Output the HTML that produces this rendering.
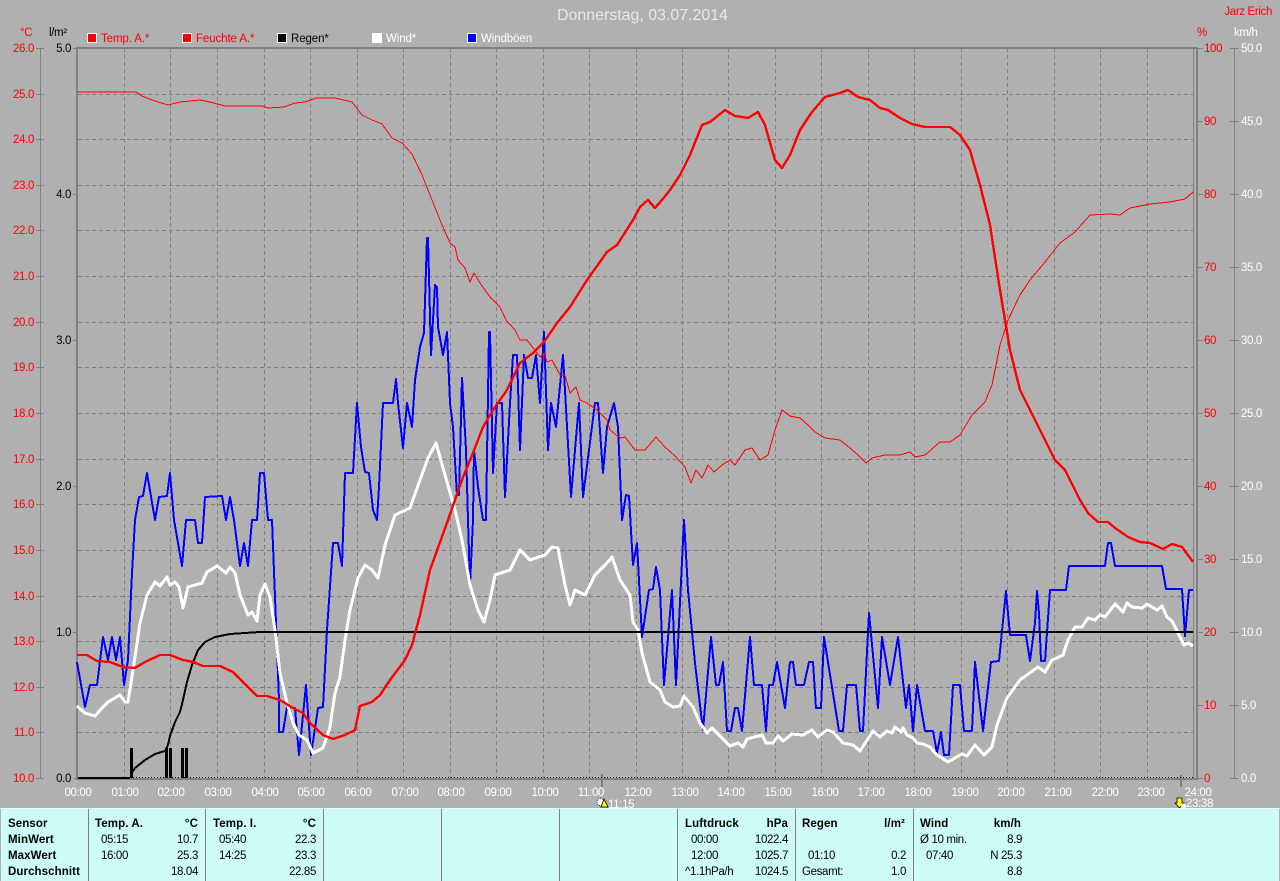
<!DOCTYPE html>
<html lang="de"><head><meta charset="utf-8"><title>Donnerstag, 03.07.2014</title>
<style>
html,body{margin:0;padding:0;background:#b0b0b0;width:1280px;height:881px;overflow:hidden}
svg{display:block}
text{font-family:"Liberation Sans",sans-serif;font-size:11.5px;letter-spacing:-.35px}
.r{fill:#f00}.w{fill:#fff}.k{fill:#000}
.e{text-anchor:end}.m{text-anchor:middle}
.l{letter-spacing:-.1px}
.b{font-weight:bold;fill:#000;font-size:11.5px;letter-spacing:.1px}
.p{fill:#000}
polyline,line,rect.c{shape-rendering:crispEdges}
polyline{fill:none;stroke-linejoin:round}
</style></head><body>
<svg width="1280" height="881" viewBox="0 0 1280 881" xmlns="http://www.w3.org/2000/svg">
<rect width="1280" height="881" fill="#b0b0b0"/>

<!-- title -->
<text x="642.5" y="20" class="m" style="font-size:16px;letter-spacing:0" fill="#e8e8e8" textLength="171" lengthAdjust="spacingAndGlyphs">Donnerstag, 03.07.2014</text>
<text x="1272" y="15" class="e r">Jarz Erich</text>
<text x="20" y="36" class="r">°C</text>
<text x="49" y="36" class="k">l/m²</text>
<text x="1197" y="36" class="r">%</text>
<text x="1234" y="36" class="w">km/h</text>

<!-- legend -->
<rect class="c" x="87.5" y="33.5" width="9" height="9" fill="#f00" stroke="#fff"/>
<text x="101" y="42" class="r l">Temp. A.*</text>
<rect class="c" x="182.5" y="33.5" width="9" height="9" fill="#f00" stroke="#fff"/>
<text x="196" y="42" class="r l">Feuchte A.*</text>
<rect class="c" x="277.5" y="33.5" width="9" height="9" fill="#000" stroke="#fff"/>
<text x="291" y="42" class="k l">Regen*</text>
<rect class="c" x="372" y="33" width="10" height="10" fill="#fff"/>
<text x="386" y="42" class="w l">Wind*</text>
<rect class="c" x="467.5" y="33.5" width="9" height="9" fill="#00f" stroke="#fff"/>
<text x="481" y="42" class="w l">Windböen</text>

<!-- grid -->
<g stroke="#808080" stroke-width="1" stroke-dasharray="4 3">
<line x1="78" x2="1193" y1="94.5" y2="94.5"/><line x1="78" x2="1193" y1="139.5" y2="139.5"/><line x1="78" x2="1193" y1="185.5" y2="185.5"/><line x1="78" x2="1193" y1="230.5" y2="230.5"/><line x1="78" x2="1193" y1="276.5" y2="276.5"/><line x1="78" x2="1193" y1="322.5" y2="322.5"/><line x1="78" x2="1193" y1="367.5" y2="367.5"/><line x1="78" x2="1193" y1="413.5" y2="413.5"/><line x1="78" x2="1193" y1="459.5" y2="459.5"/><line x1="78" x2="1193" y1="504.5" y2="504.5"/><line x1="78" x2="1193" y1="550.5" y2="550.5"/><line x1="78" x2="1193" y1="596.5" y2="596.5"/><line x1="78" x2="1193" y1="641.5" y2="641.5"/><line x1="78" x2="1193" y1="687.5" y2="687.5"/><line x1="78" x2="1193" y1="732.5" y2="732.5"/>
<line y1="48" y2="778" x1="124.5" x2="124.5"/><line y1="48" y2="778" x1="170.5" x2="170.5"/><line y1="48" y2="778" x1="217.5" x2="217.5"/><line y1="48" y2="778" x1="264.5" x2="264.5"/><line y1="48" y2="778" x1="310.5" x2="310.5"/><line y1="48" y2="778" x1="357.5" x2="357.5"/><line y1="48" y2="778" x1="403.5" x2="403.5"/><line y1="48" y2="778" x1="450.5" x2="450.5"/><line y1="48" y2="778" x1="496.5" x2="496.5"/><line y1="48" y2="778" x1="543.5" x2="543.5"/><line y1="48" y2="778" x1="589.5" x2="589.5"/><line y1="48" y2="778" x1="636.5" x2="636.5"/><line y1="48" y2="778" x1="682.5" x2="682.5"/><line y1="48" y2="778" x1="728.5" x2="728.5"/><line y1="48" y2="778" x1="775.5" x2="775.5"/><line y1="48" y2="778" x1="821.5" x2="821.5"/><line y1="48" y2="778" x1="868.5" x2="868.5"/><line y1="48" y2="778" x1="914.5" x2="914.5"/><line y1="48" y2="778" x1="961.5" x2="961.5"/><line y1="48" y2="778" x1="1007.5" x2="1007.5"/><line y1="48" y2="778" x1="1054.5" x2="1054.5"/><line y1="48" y2="778" x1="1100.5" x2="1100.5"/><line y1="48" y2="778" x1="1147.5" x2="1147.5"/>
</g>

<!-- axes -->
<g stroke="#808080" fill="none">
<line x1="76" x2="1198" y1="48" y2="48" stroke-width="2"/>
<line x1="77" x2="77" y1="47" y2="779" stroke-width="2"/>
<line x1="1193.5" x2="1193.5" y1="47" y2="779" stroke-width="1"/>
<line x1="1197" x2="1197" y1="47" y2="779" stroke-width="2"/>
<line x1="76" x2="1198" y1="779" y2="779" stroke-width="2"/>
<line x1="40.5" x2="40.5" y1="48" y2="778"/>
<line x1="1234.5" x2="1234.5" y1="48" y2="778"/>
<line x1="602" x2="602" y1="774" y2="787" stroke-width="2"/>
<line x1="1181" x2="1181" y1="775" y2="787" stroke-width="2"/>
<path d="M36 48.5h8M36 94.5h8M36 139.5h8M36 185.5h8M36 230.5h8M36 276.5h8M36 322.5h8M36 367.5h8M36 413.5h8M36 459.5h8M36 504.5h8M36 550.5h8M36 596.5h8M36 641.5h8M36 687.5h8M36 732.5h8M36 778.5h8" shape-rendering="crispEdges"/>
<path d="M73 48.5h4M73 194.5h4M73 340.5h4M73 486.5h4M73 632.5h4M73 778.5h4" shape-rendering="crispEdges"/>
<path d="M1198 48.5h5M1198 121.5h5M1198 194.5h5M1198 267.5h5M1198 340.5h5M1198 413.5h5M1198 486.5h5M1198 559.5h5M1198 632.5h5M1198 705.5h5M1198 778.5h5" shape-rendering="crispEdges"/>
<path d="M1230 48.5h8M1230 121.5h8M1230 194.5h8M1230 267.5h8M1230 340.5h8M1230 413.5h8M1230 486.5h8M1230 559.5h8M1230 632.5h8M1230 705.5h8M1230 778.5h8" shape-rendering="crispEdges"/>
</g>

<!-- left scale -->
<g class="r">
<text x="34" y="52" class="e r">26.0</text><text x="34" y="98" class="e r">25.0</text><text x="34" y="143" class="e r">24.0</text><text x="34" y="189" class="e r">23.0</text><text x="34" y="234" class="e r">22.0</text><text x="34" y="280" class="e r">21.0</text><text x="34" y="326" class="e r">20.0</text><text x="34" y="371" class="e r">19.0</text><text x="34" y="417" class="e r">18.0</text><text x="34" y="463" class="e r">17.0</text><text x="34" y="508" class="e r">16.0</text><text x="34" y="554" class="e r">15.0</text><text x="34" y="600" class="e r">14.0</text><text x="34" y="645" class="e r">13.0</text><text x="34" y="691" class="e r">12.0</text><text x="34" y="736" class="e r">11.0</text><text x="34" y="782" class="e r">10.0</text>
</g>
<text x="71" y="52" class="e k">5.0</text><text x="71" y="198" class="e k">4.0</text><text x="71" y="344" class="e k">3.0</text><text x="71" y="490" class="e k">2.0</text><text x="71" y="636" class="e k">1.0</text><text x="71" y="782" class="e k">0.0</text>

<!-- right scales -->
<text x="1204" y="52" class="r">100</text><text x="1204" y="125" class="r">90</text><text x="1204" y="198" class="r">80</text><text x="1204" y="271" class="r">70</text><text x="1204" y="344" class="r">60</text><text x="1204" y="417" class="r">50</text><text x="1204" y="490" class="r">40</text><text x="1204" y="563" class="r">30</text><text x="1204" y="636" class="r">20</text><text x="1204" y="709" class="r">10</text><text x="1204" y="782" class="r">0</text>
<text x="1241" y="52" class="w">50.0</text><text x="1241" y="125" class="w">45.0</text><text x="1241" y="198" class="w">40.0</text><text x="1241" y="271" class="w">35.0</text><text x="1241" y="344" class="w">30.0</text><text x="1241" y="417" class="w">25.0</text><text x="1241" y="490" class="w">20.0</text><text x="1241" y="563" class="w">15.0</text><text x="1241" y="636" class="w">10.0</text><text x="1241" y="709" class="w">5.0</text><text x="1241" y="782" class="w">0.0</text>

<!-- time labels -->
<text x="78" y="796" class="m w">00:00</text><text x="125" y="796" class="m w">01:00</text><text x="171" y="796" class="m w">02:00</text><text x="218" y="796" class="m w">03:00</text><text x="265" y="796" class="m w">04:00</text><text x="311" y="796" class="m w">05:00</text><text x="358" y="796" class="m w">06:00</text><text x="405" y="796" class="m w">07:00</text><text x="451" y="796" class="m w">08:00</text><text x="498" y="796" class="m w">09:00</text><text x="545" y="796" class="m w">10:00</text><text x="591" y="796" class="m w">11:00</text><text x="638" y="796" class="m w">12:00</text><text x="685" y="796" class="m w">13:00</text><text x="731" y="796" class="m w">14:00</text><text x="778" y="796" class="m w">15:00</text><text x="825" y="796" class="m w">16:00</text><text x="871" y="796" class="m w">17:00</text><text x="918" y="796" class="m w">18:00</text><text x="965" y="796" class="m w">19:00</text><text x="1011" y="796" class="m w">20:00</text><text x="1058" y="796" class="m w">21:00</text><text x="1105" y="796" class="m w">22:00</text><text x="1151" y="796" class="m w">23:00</text><text x="1198" y="796" class="m w">24:00</text>

<!-- dotted baseline -->
<line x1="130" x2="1193" y1="777.5" y2="777.5" stroke="#000" stroke-dasharray="1 2"/>

<!-- Windböen -->
<polyline stroke="#00f" stroke-width="2" points="77,662 85,707 90,685 97,685 103,637 108,660 112,637 116,660 120,637 124,685 128,660 132,573 135,520 139,497 143,496 147,473 155,520 159,497 167,496 170,473 174,520 182,566 186,520 195,520 198,543 202,543 205,497 222,496 226,520 230,497 234,520 240,566 244,543 248,566 252,520 257,520 260,473 264,473 268,520 272,520 275,597 279,700 279,732 283,732 287,707 295,708 299,755 306,685 311,755 318,708 323,707 327,630 333,543 338,543 342,566 345,473 353,473 357,403 361,447 365,472 369,473 373,510 377,520 379,487 383,403 393,403 396,379 398,403 403,448 407,403 412,427 415,380 420,347 424,333 427,238 428,238 431,355 435,285 437,287 438,327 443,355 447,332 450,403 453,427 457,495 459,495 462,378 466,450 468,520 470,585 473,520 474,450 478,487 483,520 486,520 489,332 490,332 493,473 497,403 502,403 505,497 510,403 513,355 517,355 520,450 524,355 528,378 532,378 536,355 540,403 544,332 548,450 551,403 556,427 563,355 571,497 579,403 583,497 595,403 598,403 603,473 607,427 614,403 618,427 622,520 626,495 629,496 633,565 637,543 642,637 649,590 653,589 656,567 660,590 664,685 672,590 676,685 684,520 688,590 695,663 703,730 711,637 716,685 719,685 723,662 727,731 731,731 735,708 738,708 742,731 750,637 754,685 762,685 766,731 769,685 773,685 777,662 785,708 790,662 793,662 796,685 804,685 809,662 813,662 816,708 821,708 824,637 839,731 843,731 847,685 856,685 860,731 863,731 869,613 878,708 882,637 890,685 898,637 906,708 909,685 913,731 917,685 925,731 933,731 937,753 941,732 944,755 949,755 953,685 960,685 964,731 972,731 975,662 983,731 991,662 999,661 1006,591 1010,635 1026,635 1030,661 1035,623 1037,591 1039,613 1041,661 1045,661 1050,590 1066,590 1069,566 1105,566 1108,543 1111,543 1115,566 1162,566 1166,589 1182,589 1185,636 1189,590 1193,590"/>

<!-- Wind -->
<polyline stroke="#fff" stroke-width="3" points="77,706 85,713 95,716 102,708 108,702 120,695 125,702 128,702 135,657 140,623 147,595 155,582 160,586 167,577 170,585 175,582 179,587 183,608 188,587 202,583 207,572 217,566 226,573 230,567 235,573 240,595 248,615 252,612 257,621 260,595 265,584 270,597 275,630 280,673 287,703 293,723 299,735 307,740 313,753 323,748 330,727 335,693 340,677 345,640 350,610 358,578 365,565 372,570 378,578 385,545 395,515 410,508 420,480 428,458 436,443 445,475 455,510 462,540 470,585 478,610 484,622 490,600 495,575 510,570 520,550 530,560 545,555 552,547 558,548 565,585 570,605 575,590 585,595 595,575 605,565 612,557 620,580 630,595 633,622 638,630 642,653 650,682 660,690 665,702 673,707 680,706 684,696 693,707 700,723 707,733 712,728 718,734 730,746 738,743 743,747 747,739 762,735 766,743 773,743 778,736 783,741 787,738 792,734 803,735 812,730 818,737 827,730 833,732 843,743 853,745 860,751 873,731 880,737 887,731 892,733 895,727 901,732 903,728 907,735 913,738 917,743 923,744 930,747 937,755 948,762 955,758 962,754 967,756 975,745 984,755 992,747 997,725 1007,698 1020,680 1038,667 1045,672 1052,660 1057,658 1063,655 1068,640 1075,627 1082,627 1088,618 1095,620 1100,615 1105,617 1115,604 1123,612 1127,603 1132,607 1142,608 1147,604 1157,610 1162,606 1167,617 1172,621 1178,633 1184,645 1188,643 1193,646"/>

<!-- Regen -->
<polyline stroke="#000" stroke-width="2" points="78,778 130,778"/>
<g fill="#000"><rect class="c" x="130" y="748" width="3" height="30"/><rect class="c" x="165" y="748" width="3" height="30"/><rect class="c" x="169" y="748" width="3" height="30"/><rect class="c" x="181" y="748" width="3" height="30"/><rect class="c" x="185" y="748" width="3" height="30"/></g>
<polyline stroke="#000" stroke-width="2" points="131,774 135,768 145,760 155,754 165,751 168,745 170,736 175,722 180,712 183,700 187,682 192,665 198,650 205,642 215,637 230,634 245,633 260,632 265,632"/>
<polyline stroke="#000" stroke-width="2.4" points="260,632 1193,632"/>

<!-- Feuchte -->
<polyline stroke="#f00" stroke-width="1" points="78,92 136,92 142,96 155,101 168,105 180,102 200,100 210,102 225,106 262,106 268,108 284,107 295,103 305,102 316,98 335,98 352,102 362,115 372,120 382,124 392,138 402,143 412,154 422,175 432,200 440,220 450,243 455,247 458,260 465,268 470,282 474,273 480,283 490,297 500,307 506,320 515,330 520,340 527,340 540,357 544,353 547,362 552,360 560,375 565,375 570,393 576,387 580,400 587,403 597,410 607,420 610,430 620,438 625,437 635,450 645,450 656,437 665,447 675,456 685,467 691,483 696,470 702,478 708,465 714,472 722,465 730,460 735,465 745,450 752,448 760,460 768,455 775,430 782,410 790,416 800,418 808,425 815,432 825,438 840,440 850,448 858,455 866,463 872,458 885,455 900,455 910,452 915,457 925,455 940,442 950,442 960,435 972,415 985,402 992,385 1000,345 1008,320 1020,295 1030,280 1045,262 1060,243 1075,232 1090,215 1110,214 1120,215 1130,208 1150,204 1170,202 1185,199 1193,192"/>

<!-- Temp -->
<polyline stroke="#f00" stroke-width="2.4" points="77,655 87,655 97,661 110,662 123,667 135,668 145,662 160,655 170,655 183,660 193,662 203,666 220,666 233,672 243,682 257,696 267,696 280,700 293,708 303,713 310,723 323,735 333,739 345,735 355,730 360,706 372,702 380,695 390,680 405,660 412,645 420,615 430,570 448,520 463,477 473,453 483,427 493,410 507,390 520,363 533,353 544,342 557,323 570,307 587,280 607,252 617,245 633,220 640,207 648,200 655,208 662,200 670,190 680,175 690,155 702,125 710,122 725,110 735,116 748,118 758,112 765,125 775,160 782,168 790,155 800,130 812,112 825,97 840,93 848,90 858,97 870,100 880,108 888,110 900,118 912,124 925,127 950,127 960,135 970,150 980,185 990,225 1000,290 1010,350 1020,390 1040,430 1055,460 1065,470 1080,500 1088,513 1098,522 1108,522 1115,528 1128,537 1140,542 1150,543 1163,549 1172,544 1182,547 1193,562"/>

<!-- sun events -->
<circle cx="600.5" cy="802" r="3.5" fill="#fff" stroke="#33c" stroke-width="1" stroke-dasharray="1 1"/>
<path d="M604 799l4 8h-7z" fill="#ff0" stroke="#000" stroke-width=".8"/>
<text x="608" y="808" class="w">11:15</text>
<path d="M1177 798h5v5h2l-4.500 5-4.500-5h2z" fill="#ff0" stroke="#000" stroke-width=".8"/>
<circle cx="1183.500" cy="806" r="2.500" fill="#fff"/>
<text x="1186" y="807" class="w">23:38</text>

<!-- bottom panel -->
<rect class="c" x="1" y="808" width="1278" height="73" fill="#ccfbf8"/>
<rect class="c" x="0" y="808" width="1280" height="1" fill="#e8ffff"/>
<g fill="#808080"><rect class="c" x="88" y="809" width="1" height="72"/><rect class="c" x="205" y="809" width="1" height="72"/><rect class="c" x="323" y="809" width="1" height="72"/><rect class="c" x="441" y="809" width="1" height="72"/><rect class="c" x="559" y="809" width="1" height="72"/><rect class="c" x="677" y="809" width="1" height="72"/><rect class="c" x="795" y="809" width="1" height="72"/><rect class="c" x="913" y="809" width="1" height="72"/></g>

<text x="8" y="827" class="b">Sensor</text>
<text x="8" y="843" class="b">MinWert</text>
<text x="8" y="859" class="b">MaxWert</text>
<text x="8" y="875" class="b" textLength="72" lengthAdjust="spacingAndGlyphs">Durchschnitt</text>

<text x="95" y="827" class="b">Temp. A.</text><text x="198" y="827" class="b e">°C</text>
<text x="101" y="843" class="p">05:15</text><text x="198" y="843" class="p e">10.7</text>
<text x="101" y="859" class="p">16:00</text><text x="198" y="859" class="p e">25.3</text>
<text x="198" y="875" class="p e">18.04</text>

<text x="213" y="827" class="b">Temp. I.</text><text x="316" y="827" class="b e">°C</text>
<text x="219" y="843" class="p">05:40</text><text x="316" y="843" class="p e">22.3</text>
<text x="219" y="859" class="p">14:25</text><text x="316" y="859" class="p e">23.3</text>
<text x="316" y="875" class="p e">22.85</text>

<text x="685" y="827" class="b">Luftdruck</text><text x="788" y="827" class="b e">hPa</text>
<text x="691" y="843" class="p">00:00</text><text x="788" y="843" class="p e">1022.4</text>
<text x="691" y="859" class="p">12:00</text><text x="788" y="859" class="p e">1025.7</text>
<text x="685" y="875" class="p">^1.1hPa/h</text><text x="788" y="875" class="p e">1024.5</text>

<text x="802" y="827" class="b">Regen</text><text x="905" y="827" class="b e">l/m²</text>
<text x="808" y="859" class="p">01:10</text><text x="906" y="859" class="p e">0.2</text>
<text x="802" y="875" class="p">Gesamt:</text><text x="906" y="875" class="p e">1.0</text>

<text x="920" y="827" class="b">Wind</text><text x="1021" y="827" class="b e">km/h</text>
<text x="920" y="843" class="p">Ø 10 min.</text><text x="1022" y="843" class="p e">8.9</text>
<text x="926" y="859" class="p">07:40</text><text x="1022" y="859" class="p e">N 25.3</text>
<text x="1022" y="875" class="p e">8.8</text>
</svg>
</body></html>
